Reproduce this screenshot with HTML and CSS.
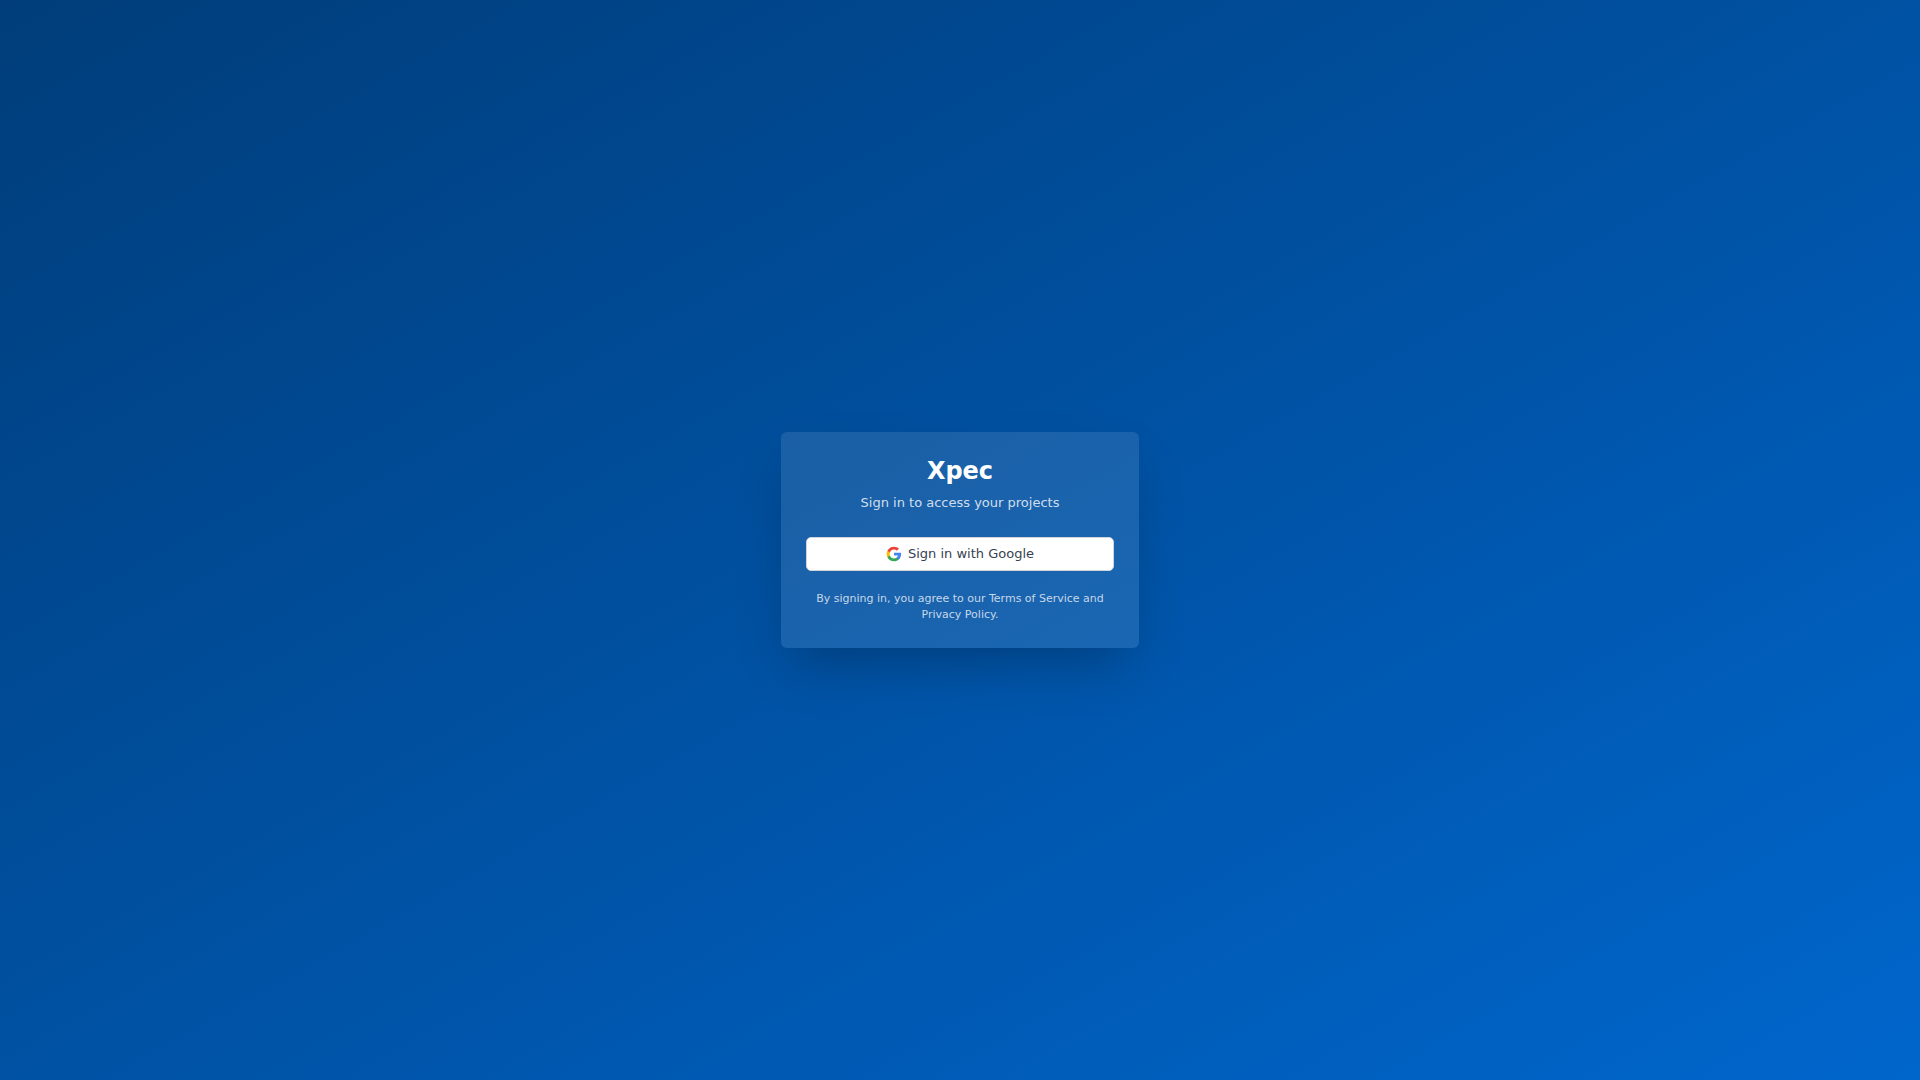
FILE: index.html
```html
<!DOCTYPE html>
<html lang="en">
<head>
<meta charset="utf-8">
<meta name="viewport" content="width=device-width, initial-scale=1">
<title>Xpec</title>
<link rel="stylesheet" href="styles.css">
</head>
<body>
<main class="page">
  <section class="card">
    <header class="card-header">
      <h1 class="title">Xpec</h1>
      <p class="subtitle">Sign in to access your projects</p>
    </header>
    <button class="google-button" type="button">
      <svg class="google-icon" viewBox="0 0 24 24" aria-hidden="true">
        <path fill="#4285F4" d="M22.56 12.25c0-.78-.07-1.53-.2-2.25H12v4.26h5.92c-.26 1.37-1.04 2.53-2.21 3.31v2.77h3.57c2.08-1.92 3.28-4.74 3.28-8.09z"/>
        <path fill="#34A853" d="M12 23c2.97 0 5.46-.98 7.28-2.66l-3.57-2.77c-.98.66-2.23 1.06-3.71 1.06-2.86 0-5.29-1.93-6.16-4.53H2.18v2.84C3.99 20.53 7.7 23 12 23z"/>
        <path fill="#FBBC05" d="M5.84 14.09c-.22-.66-.35-1.36-.35-2.09s.13-1.43.35-2.09V7.07H2.18C1.43 8.55 1 10.22 1 12s.43 3.45 1.18 4.93l2.85-2.22.81-.62z"/>
        <path fill="#EA4335" d="M12 5.38c1.62 0 3.06.56 4.21 1.64l3.15-3.15C17.45 2.09 14.97 1 12 1 7.7 1 3.99 3.47 2.18 7.07l3.66 2.84c.87-2.6 3.3-4.53 6.16-4.53z"/>
      </svg>
      <span>Sign in with Google</span>
    </button>
    <p class="terms">By signing in, you agree to our Terms of Service and Privacy Policy.</p>
  </section>
</main>
</body>
</html>
```

FILE: styles.css
```css
* {
  box-sizing: border-box;
  margin: 0;
}

body {
  font-family: "DejaVu Sans", sans-serif;
  color: #fff;
}

.page {
  min-height: 100vh;
  display: flex;
  align-items: center;
  justify-content: center;
  padding: 16px;
  background: linear-gradient(to bottom right, #003d7a, #0066cc);
}

.card {
  width: 100%;
  max-width: 358px;
  padding: 25px;
  border-radius: 6px;
  background: rgba(255, 255, 255, 0.1);
  box-shadow: 0 25px 50px -12px rgba(0, 0, 0, 0.25);
  text-align: center;
}

.card-header {
  margin-bottom: 24px;
}

.title {
  margin-bottom: 8px;
  font-size: 24px;
  line-height: 28px;
  font-weight: 700;
}

.subtitle {
  font-size: 13px;
  line-height: 20px;
  color: rgba(255, 255, 255, 0.8);
}

.google-button {
  display: flex;
  align-items: center;
  justify-content: center;
  gap: 6px;
  width: 100%;
  height: 34px;
  border: 1px solid #d1d5db;
  border-radius: 5px;
  background: #fff;
  color: #374151;
  font: 13px/20px "DejaVu Sans", sans-serif;
}

.google-icon {
  width: 16px;
  height: 16px;
}

.terms {
  margin-top: 20px;
  font-size: 11px;
  line-height: 16px;
  color: rgba(255, 255, 255, 0.75);
}
```
